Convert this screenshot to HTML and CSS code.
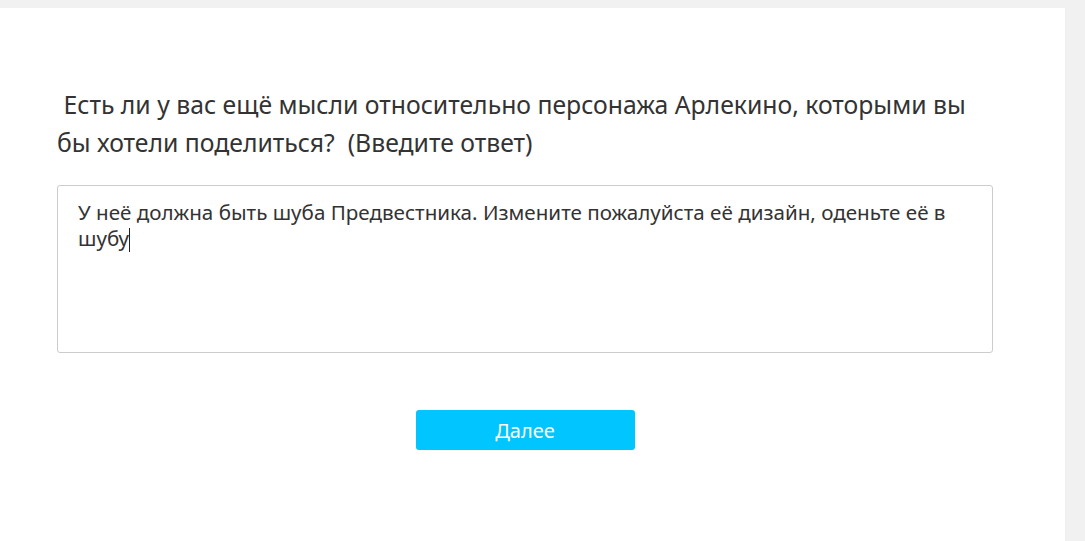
FILE: index.html
```html
<!DOCTYPE html>
<html lang="ru">
<head>
<meta charset="utf-8">
<link rel="stylesheet" href="styles.css">
</head>
<body>
<main class="panel">
  <p class="question">&nbsp;Есть ли у вас ещё мысли относительно персонажа Арлекино, которыми вы бы хотели поделиться?&nbsp; (Введите ответ)</p>
  <div class="answer">У неё должна быть шуба Предвестника. Измените пожалуйста её дизайн, оденьте её в шубу<span class="caret"></span></div>
  <div class="actions">
    <button class="next">Далее</button>
  </div>
</main>
</body>
</html>
```
FILE: styles.css
```css
html, body {
  margin: 0;
  padding: 0;
  background: #f1f1f1;
  height: 100%;
}
body {
  font-family: "Noto Sans", "Open Sans", sans-serif;
  color: #333;
  overflow: hidden;
}
.panel {
  box-sizing: border-box;
  margin-top: 8px;
  width: 1065px;
  height: 533px;
  background: #fff;
  padding: 0 0 0 57px;
  display: flex;
  flex-direction: column;
}
.question {
  margin: 78px 0 0 0;
  width: 935px;
  font-size: 24.75px;
  line-height: 38px;
  color: #333;
}
.answer {
  box-sizing: border-box;
  margin-top: 23px;
  width: 936px;
  height: 168px;
  border: 1px solid #ccc;
  border-radius: 3px;
  padding: 13px 20px;
  font-size: 20.6px;
  line-height: 26px;
  color: #333;
}
.caret {
  display: inline-block;
  width: 1px;
  height: 24px;
  background: #222;
  vertical-align: -6px;
}
.actions {
  width: 936px;
  display: flex;
  justify-content: center;
  margin-top: 57px;
}
.next {
  width: 219px;
  height: 40px;
  border: none;
  border-radius: 3px;
  background: #00c5ff;
  color: #fff;
  font-family: "Noto Sans", "Open Sans", sans-serif;
  font-size: 20px;
  padding: 0;
}
```
